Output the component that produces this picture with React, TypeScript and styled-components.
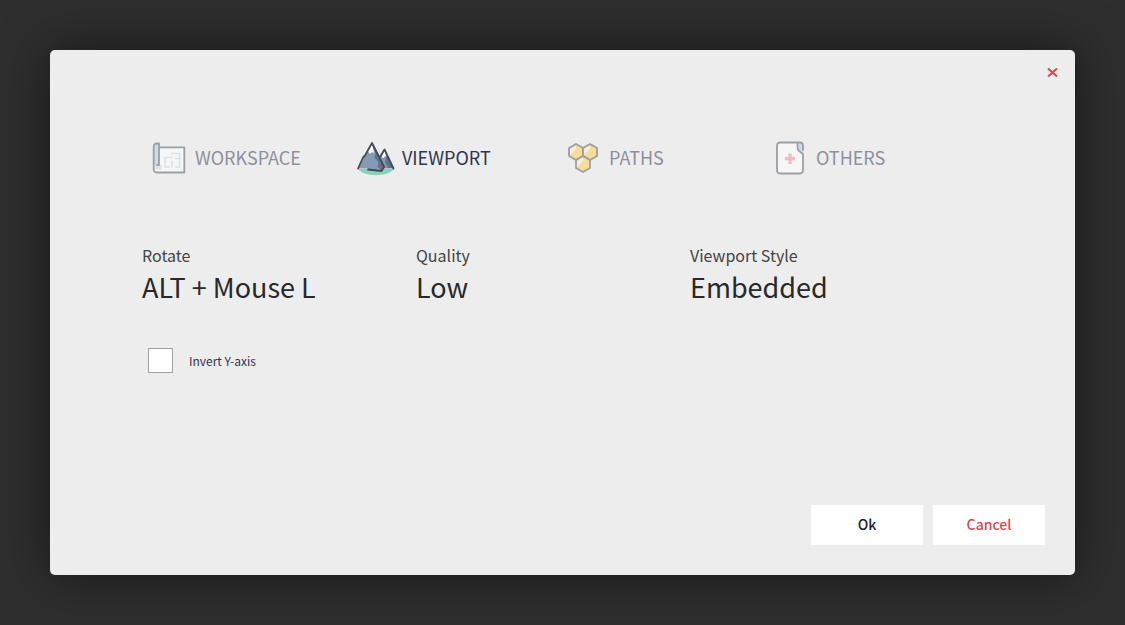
import React, { useState } from "react";
import styled, { createGlobalStyle } from "styled-components";

const GlobalStyle = createGlobalStyle`
  *, *::before, *::after { box-sizing: border-box; }
  body {
    margin: 0;
    background: #2e2e2e;
    font-family: "Noto Sans CJK SC", "Noto Sans", sans-serif;
  }
  button, select, input { font-family: inherit; }
`;

const Backdrop = styled.main`
  display: flex;
  min-height: 100vh;
  padding: 50px;
`;

const Dialog = styled.section`
  flex: 1;
  display: flex;
  flex-direction: column;
  min-width: 0;
  border-radius: 5px;
  background: #ededed;
  box-shadow: 0 0 50px rgba(0, 0, 0, 0.5);
`;

const DialogHeader = styled.header`
  display: flex;
  justify-content: flex-end;
  padding: 12px 12px 0 0;
`;

const CloseButton = styled.button`
  display: flex;
  align-items: center;
  justify-content: center;
  width: 21px;
  height: 21px;
  padding: 0;
  border: 0;
  background: none;
  color: #d8494d;
  cursor: pointer;
`;

const DialogBody = styled.div`
  flex: 1;
  padding: 55px 111px 0 92px;
`;

const TabList = styled.div`
  display: grid;
  grid-template-columns: repeat(4, 1fr);
  gap: 6px;
`;

const Tab = styled.button<{ $active: boolean }>`
  display: flex;
  align-items: center;
  gap: 6px;
  height: 40px;
  padding: 0 0 0 7px;
  border: 0;
  background: none;
  color: #2f3450;
  font-size: 18px;
  line-height: 24px;
  opacity: ${({ $active }) => ($active ? 1 : 0.5)};
  cursor: pointer;

  svg { flex: none; }
`;

const TabText = styled.span`
  padding-bottom: 2px;
`;

const FieldGrid = styled.div`
  display: grid;
  grid-template-columns: repeat(3, 1fr);
  margin-top: 65px;
`;

const Field = styled.div`
  display: flex;
  flex-direction: column;
  align-items: flex-start;
`;

const FieldLabel = styled.label`
  color: #444444;
  font-size: 16px;
  line-height: 24px;
`;

const FieldSelect = styled.select`
  appearance: none;
  height: 40px;
  padding: 0;
  border: 0;
  background: none;
  color: #282828;
  font-size: 27px;
  line-height: 40px;
  cursor: pointer;
`;

const CheckRow = styled.label`
  display: inline-flex;
  align-items: center;
  gap: 16px;
  margin: 41px 0 0 6px;
  color: #2f3450;
  font-size: 12px;
  line-height: 20px;
`;

const Checkbox = styled.input`
  appearance: none;
  width: 25px;
  height: 25px;
  margin: 0;
  border: 1px solid #a0a0a0;
  background: #ffffff;

  &:checked { box-shadow: inset 0 0 0 5px #ffffff; background: #2f3450; }
`;

const DialogFooter = styled.footer`
  display: flex;
  justify-content: flex-end;
  gap: 10px;
  padding: 30px;
`;

const ActionButton = styled.button<{ $danger?: boolean }>`
  width: 112px;
  height: 40px;
  padding: 0 0 2px;
  border: 0;
  background: #ffffff;
  color: ${({ $danger }) => ($danger ? "#d8494d" : "#202124")};
  font-size: 14px;
  font-weight: 500;
  line-height: 20px;
  cursor: pointer;
`;

const iconProps = {
  width: 40,
  height: 40,
  viewBox: "0 0 40 40",
  fill: "none",
  strokeLinejoin: "round" as const,
  strokeLinecap: "round" as const,
  "aria-hidden": true,
};

const BlueprintIcon = () => (
  <svg {...iconProps}>
    <path d="M10 9H35.500V34.500H7Q4.700 34.500 4.700 31V9Q4.700 5.500 7 5.500H10Z" fill="#fff" />
    <path d="M4.700 27V9Q4.700 5.500 7.500 5.500H10V27Z" fill="#b7cbdc" />
    <path d="M6 27H12.500V31.500H6Z" fill="#d7d7d7" />
    <path d="M10 27V5.500H8Q4.700 5.500 4.700 9V31Q4.700 34.500 8 34.500H35.300V9.300H10M10 27H8" stroke="#4c5560" strokeWidth="1.800" />
    <path d="M24 19.500H16V29H21M23 23V29.500M22 15.500H30.500V29H26M26 20.500H30.500" stroke="#c6d9e5" strokeWidth="1.600" strokeLinecap="butt" strokeLinejoin="miter" />
  </svg>
);

const MountainIcon = () => (
  <svg {...iconProps}>
    <path d="M1.500 31H38.500Q32 37.200 20 37.200T1.500 31Z" fill="#86d2b8" />
    <path d="M2 30.500 7 19.500 9 17.500 16 5 24 18.500 28.500 11.500 37.500 30.500H28L25.500 33 12 32V30.500Z" fill="#8699b5" />
    <path d="m16 5 12 24-2.500 3.500-4-4 1-4-4-5 1-4Z" fill="#62728a" />
    <path d="m28.500 12 8.500 18h-5l-3-6 1-4Z" fill="#62728a" />
    <path d="m16 6-4 7.500 2.200 2.500 1.800-2 2 1-1-5Z" fill="#fff" />
    <path d="m28.500 12.500-3 6.500 2 1 1.500-2 1.500 1-1-4Z" fill="#fff" />
    <path d="M2 30.500 7 19.500 9 17.500 16 5 28.200 29 25.500 33 12 31.500M24.300 18.500 28.500 11.500 37.500 30.500" stroke="#434b55" strokeWidth="1.800" />
  </svg>
);

const Hexagon = ({ x, y }: { x: number; y: number }) => (
  <g transform={`translate(${x} ${y})`}>
    <path d="M0-8 7-4V4L0 8-7 4V-4Z" fill="#ffd04a" />
    <path d="M0-7-6-3V3L0-3Z" fill="#fff3c9" />
    <path d="M0-8 7-4V4L0 8-7 4V-4Z" stroke="#4c5560" strokeWidth="1.800" />
  </g>
);

const HoneycombIcon = () => (
  <svg {...iconProps}>
    <Hexagon x={13} y={14} />
    <Hexagon x={27} y={14} />
    <Hexagon x={20} y={26} />
  </svg>
);

const DocumentIcon = () => (
  <svg {...iconProps}>
    <path d="M10 4.500H29Q33 4.500 33 8V32Q33 35.500 29.500 35.500H10.500Q7 35.500 7 32V8Q7 4.500 10 4.500Z" fill="#fff" />
    <path d="M27.500 5H31.500Q33 6 33 8V16L29 12.500Q27.500 11 27.500 9Z" fill="#b7cbdc" />
    <path d="M33 12V8Q33 4.500 29.500 4.500H10.500Q7 4.500 7 8V32Q7 35.500 10.500 35.500H29.500Q33 35.500 33 32V16L29 13Q27.500 11.500 27.500 9V5" stroke="#4c5560" strokeWidth="1.800" />
    <path d="M20 15.500V26M15 20.700H25" stroke="#ee8e9c" strokeWidth="3.200" strokeLinecap="butt" />
  </svg>
);

const tabs = [
  { name: "WORKSPACE", Icon: BlueprintIcon },
  { name: "VIEWPORT", Icon: MountainIcon },
  { name: "PATHS", Icon: HoneycombIcon },
  { name: "OTHERS", Icon: DocumentIcon },
];

const fields = [
  { id: "rotate", label: "Rotate", value: "ALT + Mouse L" },
  { id: "quality", label: "Quality", value: "Low" },
  { id: "viewport-style", label: "Viewport Style", value: "Embedded" },
];

export default function App() {
  const [active, setActive] = useState("VIEWPORT");

  return (
    <>
      <GlobalStyle />
      <Backdrop>
        <Dialog role="dialog" aria-label="Settings">
          <DialogHeader>
            <CloseButton type="button" aria-label="Close">
              <svg width="11" height="11" viewBox="0 0 11 11" fill="none" aria-hidden="true">
                <path d="M1 1.500 10 9.500M10 1.500 1 9.500" stroke="currentColor" strokeWidth="2" />
              </svg>
            </CloseButton>
          </DialogHeader>
          <DialogBody>
            <TabList role="tablist">
              {tabs.map(({ name, Icon }) => (
                <Tab
                  key={name}
                  type="button"
                  role="tab"
                  aria-selected={active === name}
                  $active={active === name}
                  onClick={() => setActive(name)}
                >
                  <Icon />
                  <TabText>{name}</TabText>
                </Tab>
              ))}
            </TabList>
            <FieldGrid>
              {fields.map(({ id, label, value }) => (
                <Field key={id}>
                  <FieldLabel htmlFor={id}>{label}</FieldLabel>
                  <FieldSelect id={id} defaultValue={value}>
                    <option>{value}</option>
                  </FieldSelect>
                </Field>
              ))}
            </FieldGrid>
            <CheckRow>
              <Checkbox type="checkbox" />
              Invert Y-axis
            </CheckRow>
          </DialogBody>
          <DialogFooter>
            <ActionButton type="button">Ok</ActionButton>
            <ActionButton type="button" $danger>Cancel</ActionButton>
          </DialogFooter>
        </Dialog>
      </Backdrop>
    </>
  );
}
